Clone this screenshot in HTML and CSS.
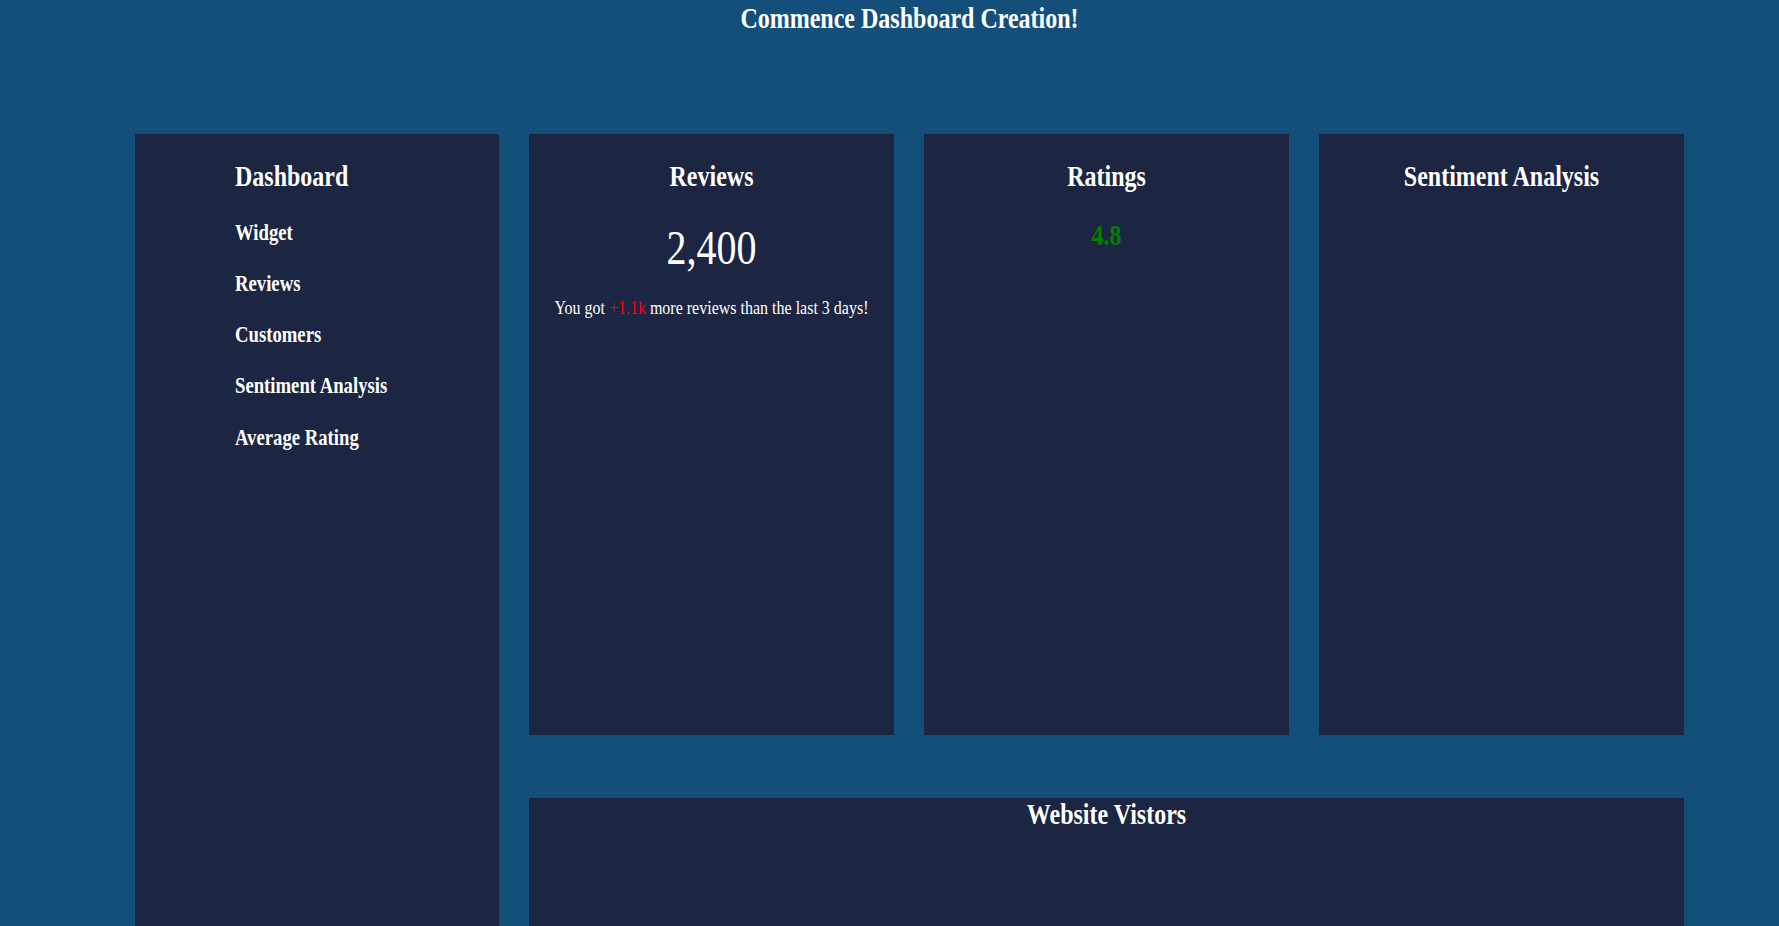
FILE: index.html
```html
<!DOCTYPE html>
<html lang="en">
<head>
<meta charset="utf-8">
<title>Dashboard</title>
<link rel="stylesheet" href="styles.css">
</head>
<body>
<div class="page">
  <header class="page-header">
    <h2 class="page-title">Commence Dashboard Creation!</h2>
  </header>
  <main class="grid">
    <aside class="panel sidebar">
      <h2 class="panel-title sidebar-title">Dashboard</h2>
      <nav class="nav">
        <h3 class="nav-item">Widget</h3>
        <h3 class="nav-item">Reviews</h3>
        <h3 class="nav-item">Customers</h3>
        <h3 class="nav-item">Sentiment Analysis</h3>
        <h3 class="nav-item">Average Rating</h3>
      </nav>
    </aside>
    <section class="panel card">
      <h2 class="panel-title">Reviews</h2>
      <div class="big-number">2,400</div>
      <p class="note">You got <span class="up">+1.1k</span> more reviews than the last 3 days!</p>
    </section>
    <section class="panel card">
      <h2 class="panel-title">Ratings</h2>
      <div class="rating">4.8</div>
    </section>
    <section class="panel card">
      <h2 class="panel-title">Sentiment Analysis</h2>
    </section>
    <section class="panel visitors">
      <h2 class="panel-title visitors-title">Website Vistors</h2>
    </section>
  </main>
</div>
</body>
</html>
```
FILE: styles.css
```css
html, body {
  margin: 0;
  padding: 0;
}

body {
  background: #134f7a;
  color: #ffffff;
  font-family: "Liberation Serif", "Times New Roman", serif;
  overflow: hidden;
}

.page {
  width: 1549px;
  margin-left: 135px;
}

.page-header {
  padding: 3px 0 101px;
}

.page-title,
.panel-title,
.nav-item,
.big-number,
.note,
.rating {
  transform: scaleY(1.23);
}

.page-title {
  margin: 0;
  font-size: 24px;
  line-height: 30px;
  font-weight: bold;
  text-align: center;
}

.grid {
  display: grid;
  grid-template-columns: 364px 365px 365px 365px;
  grid-template-rows: 601px 128px;
  column-gap: 30px;
  row-gap: 63px;
}

.panel {
  background: #1c2541;
}

.sidebar {
  grid-row: 1 / 3;
  padding: 27px 0 0 100px;
}

.card {
  display: flex;
  flex-direction: column;
  align-items: center;
  padding-top: 27px;
}

.visitors {
  grid-column: 2 / 5;
  padding-top: 1px;
  text-align: center;
}

.panel-title {
  margin: 0;
  font-size: 24px;
  line-height: 30px;
  font-weight: bold;
}

.nav {
  display: flex;
  flex-direction: column;
  gap: 21.3px;
  margin-top: 26.5px;
}

.nav-item {
  margin: 0;
  font-size: 18.72px;
  line-height: 30px;
  font-weight: bold;
}

.big-number {
  margin-top: 33px;
  font-size: 40px;
  line-height: 48px;
}

.note {
  margin: 25.5px 0 0;
  font-size: 16px;
  line-height: 20px;
}

.up {
  color: #ff0000;
}

.rating {
  margin-top: 29px;
  font-size: 24px;
  line-height: 30px;
  font-weight: bold;
  color: #008000;
}
```
